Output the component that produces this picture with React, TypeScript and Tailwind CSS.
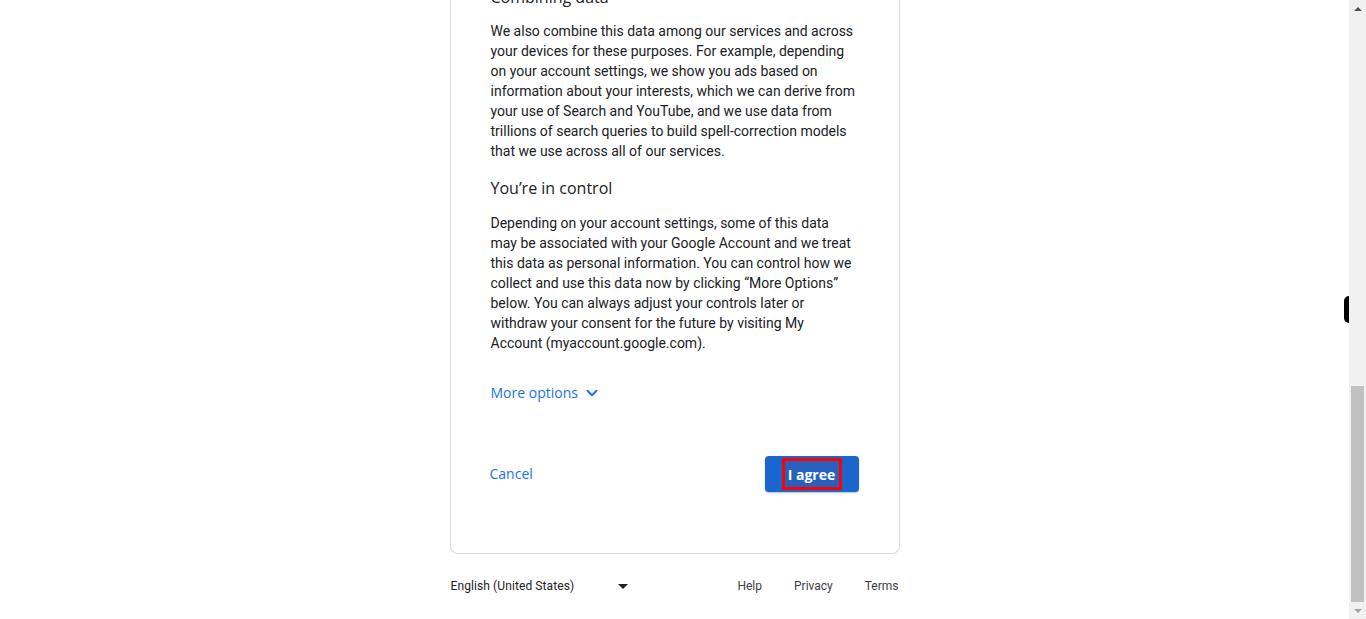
import { ChevronDown } from 'lucide-react';

const body = "font-['Roboto','Liberation_Sans',sans-serif]";
const display = "font-['Open_Sans','Roboto',sans-serif]";

function Para({ children }: { children: React.ReactNode }) {
    return (
        <p className={`${body} pr-[2px] text-[14px] leading-5 text-[#202124]`}>
            {children}
        </p>
    );
}

function Scrollbar() {
    return (
        <div className="w-[17px] h-full bg-[#f1f1f1] flex flex-col items-center">
            <div className="h-[17px] flex items-center justify-center">
                <div className="w-0 h-0 border-x-[4px] border-x-transparent border-b-[4px] border-b-[#505050]" />
            </div>
            <div className="flex-1 w-full flex flex-col justify-end px-[2px]">
                <div className="h-[216px] bg-[#c1c1c1]" />
            </div>
            <div className="h-[17px] flex items-center justify-center">
                <div className="w-0 h-0 border-x-[4px] border-x-transparent border-t-[4px] border-t-[#a3a3a3]" />
            </div>
        </div>
    );
}

export default function App() {
    return (
        <div className="w-full h-[619px] overflow-hidden bg-white flex">
            <div className="flex-1 relative flex flex-col items-center">
                <div className="w-[450px] -mt-[40px] border border-t-0 border-[#dadce0] rounded-b-lg px-10 pt-[25px] pb-[61px]">
                    <h2 className={`${display} text-[16px] leading-6 font-medium text-[#202124]`}>
                        Combining data
                    </h2>
                    <div className="mt-3">
                        <Para>
                            We also combine this data among our services and across your devices for these purposes. For example, depending on your account settings, we show you ads based on information about your interests, which we can derive from your use of Search and YouTube, and we use data from trillions of search queries to build spell-correction models that we use across all of our services.
                        </Para>
                    </div>
                    <h2 className={`${display} mt-[15px] text-[16px] leading-6 font-medium text-[#202124]`}>
                        You’re in control
                    </h2>
                    <div className="mt-[13px]">
                        <Para>
                            Depending on your account settings, some of this data may be associated with your Google Account and we treat this data as personal information. You can control how we collect and use this data now by clicking “More Options” below. You can always adjust your controls later or withdraw your consent for the future by visiting My Account (myaccount.google.com).
                        </Para>
                    </div>
                    <button className={`${display} mt-[30px] flex items-center gap-[5px] text-[14px] leading-5 font-medium text-[#1a73e8]`}>
                        More options
                        <ChevronDown className="size-[18px]" strokeWidth={2.6} />
                    </button>
                    <div className="mt-[53px] flex items-center justify-between">
                        <button className={`${display} -ml-[1px] -mt-[2px] text-[14px] font-medium text-[#1a73e8]`}>
                            Cancel
                        </button>
                        <button className="w-[94px] h-9 rounded bg-[#1a66cc] shadow-[0_1px_2px_rgba(60,64,67,0.35)] flex items-center justify-center">
                            <span className={`${display} border-[3px] border-[#ff0000] bg-[#2860bf] h-8 w-[60px] flex items-center justify-center text-[14px] font-bold text-white`}>
                                I agree
                            </span>
                        </button>
                    </div>
                </div>
                <div className={`${body} w-[450px] mt-6 flex items-center text-[12px] leading-4`}>
                    <div className="w-[180px] flex items-center justify-between pl-[1px] pr-[2px] text-[#202124]">
                        <span className="tracking-[0.1px]">English (United States)</span>
                        <span className="w-0 h-0 border-x-[5px] border-x-transparent border-t-[5px] border-t-[#202124]" />
                    </div>
                    <div className="ml-auto flex gap-8 text-[#3c4043] pr-[1px]">
                        <span>Help</span>
                        <span>Privacy</span>
                        <span>Terms</span>
                    </div>
                </div>
                <div className="absolute right-0 top-[296px] w-[5px] h-[27px] bg-black rounded-l-[5px]" />
            </div>
            <Scrollbar />
        </div>
    );
}
